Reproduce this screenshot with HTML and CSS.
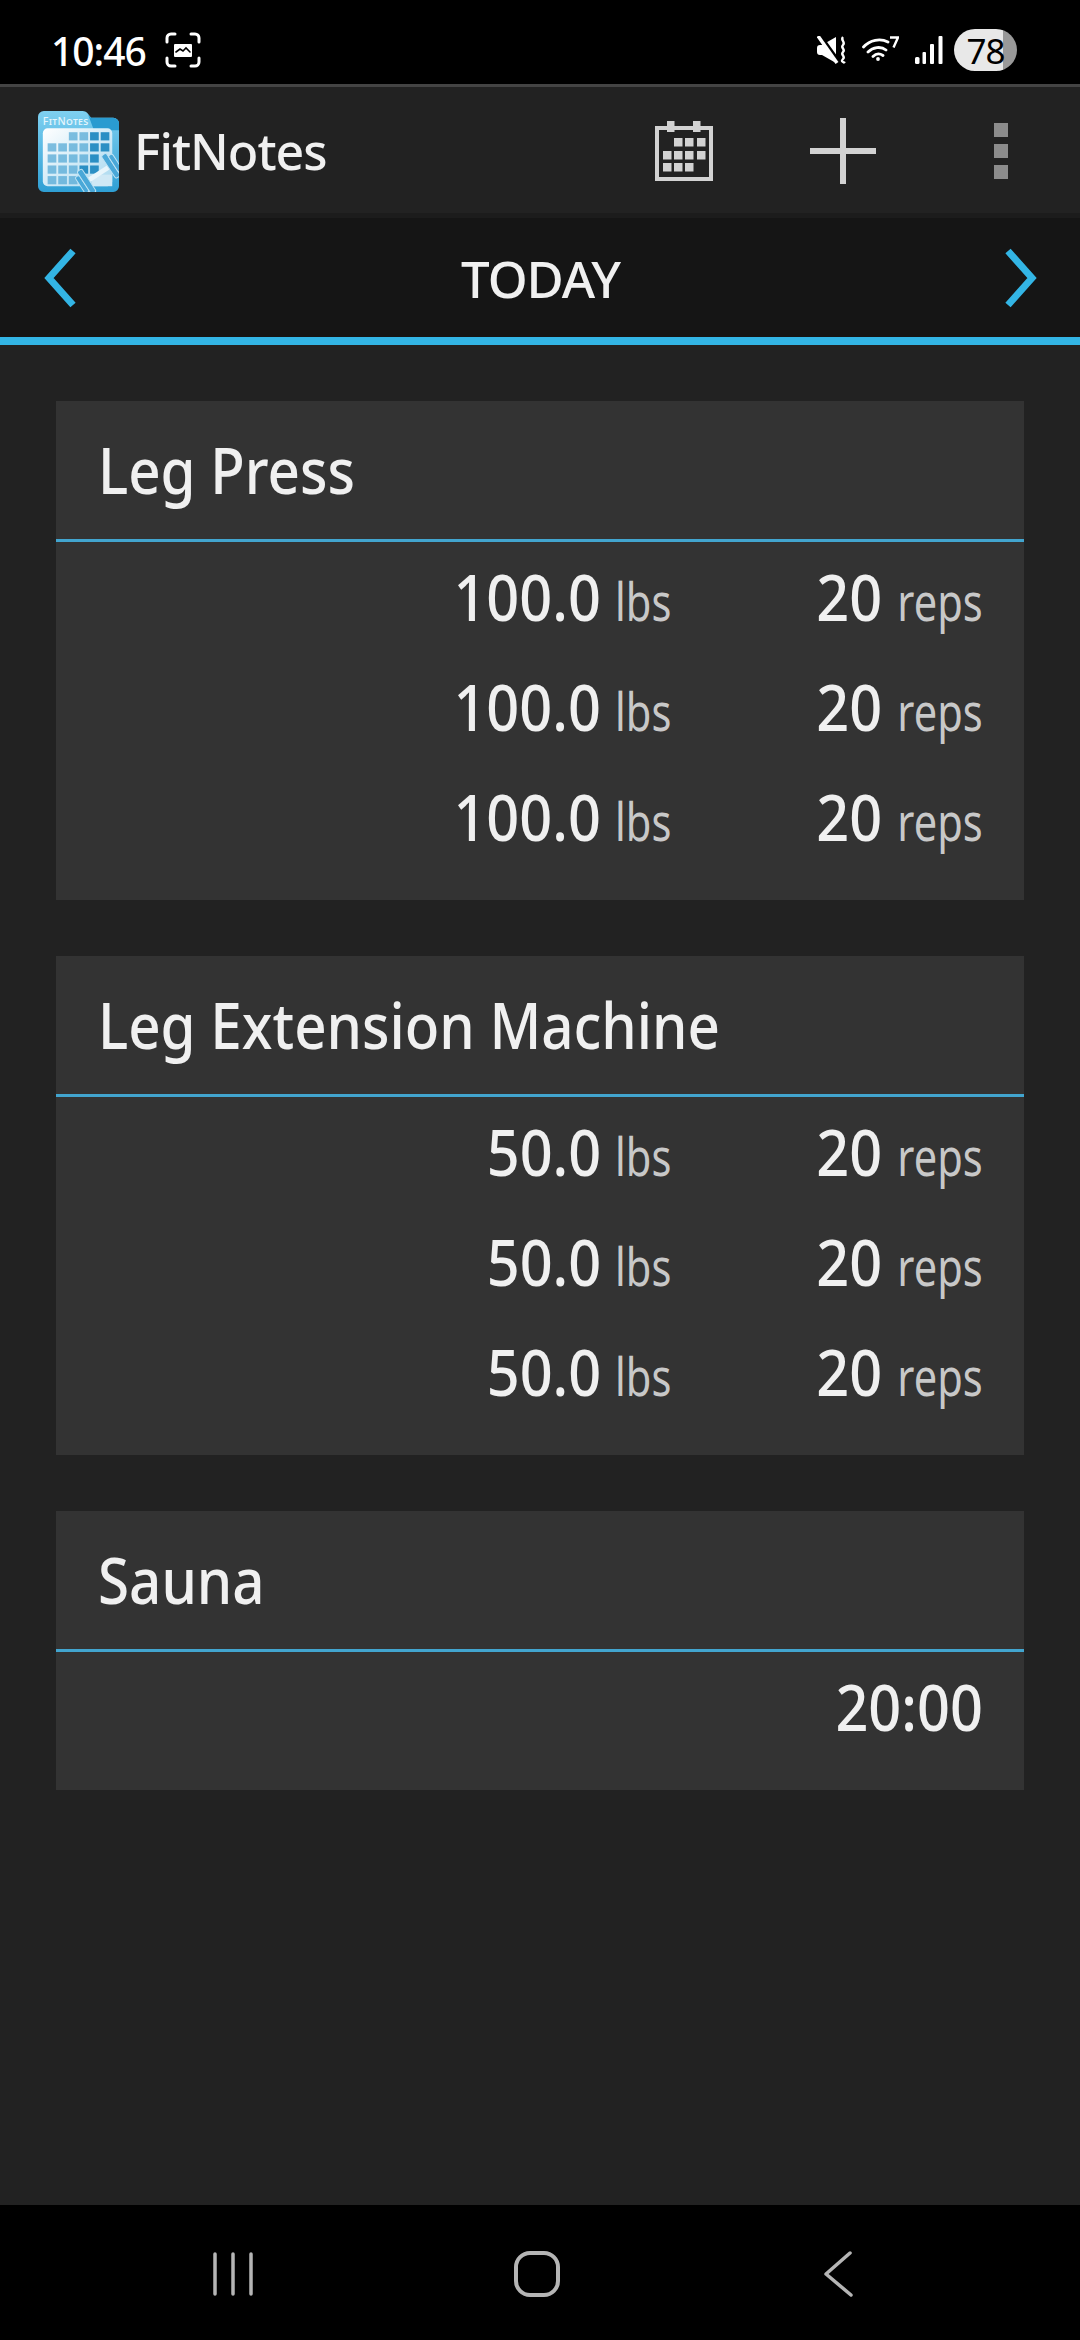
FILE: index.html
```html
<!DOCTYPE html>
<html lang="en">

<head>
  <meta charset="UTF-8">
  <meta name="viewport" content="width=device-width, initial-scale=1.0">
  <title>FitNotes</title>
  <link rel="stylesheet" href="styles.css">
</head>

<body>
  <div class="page">
    <!-- status bar -->
    <div class="status">
      <span class="clock">10:46</span>
      <svg class="shot" width="36" height="36" viewBox="0 0 36 36" fill="none" stroke="#fff" stroke-width="3" stroke-linecap="round">
        <path d="M2 10V6a4 4 0 0 1 4-4h4M26 2h4a4 4 0 0 1 4 4v4M34 26v4a4 4 0 0 1-4 4h-4M10 34H6a4 4 0 0 1-4-4v-4" />
        <path d="M10 13h16v11H10z" fill="#fff" stroke-width="2" stroke-linejoin="round" />
        <path d="M11 20l4-3 3 2 3-3 4 4" stroke="#000" stroke-width="1.6" />
      </svg>
      <div class="status-right">
        <svg width="30" height="28" viewBox="0 0 30 28" fill="#fff">
          <path d="M0 12q0-3 3-3h2L19 1v26L5 19H3q-3 0-3-3z" />
          <path d="M2 -1L22 27" stroke="#000" stroke-width="5" />
          <path d="M1 0L20 27" stroke="#fff" stroke-width="3.500" />
          <path d="M26 1c-3 3 3 5 0 8s3 4 0 7 3 4 0 7 1 3 2 4" fill="none" stroke="#fff" stroke-width="2.400" />
        </svg>
        <svg class="wifi" width="37" height="25" viewBox="0 0 37 25" fill="none" stroke="#fff" stroke-width="2.800" stroke-linecap="round">
          <path d="M1.500 11C8 4 18 2 26 6M6 16c5-5 13-6 18-2M11 20.500c3-3 7-3 10-1" />
          <circle cx="16" cy="23" r="1.900" fill="#fff" stroke="none" />
          <path d="M28 1.500h8l-4.500 10" stroke-width="2.400" stroke-linecap="butt" />
        </svg>
        <svg class="signal" width="28" height="28" viewBox="0 0 28 28" fill="#fff">
          <rect x="0" y="21" width="4.500" height="7" rx="1.500" />
          <rect x="7.500" y="16" width="3.500" height="12" rx="1" />
          <rect x="15" y="8" width="4" height="20" rx="1" />
          <rect x="23.500" y="0" width="4" height="28" rx="1" />
        </svg>
        <div class="battery"><span class="battery-num">78</span></div>
      </div>
    </div>

    <!-- app bar -->
    <div class="appbar">
      <svg class="logo" width="81" height="81" viewBox="0 0 84 84">
        <defs>
          <linearGradient id="folder" x1="0" y1="0" x2="0" y2="1">
            <stop offset="0" stop-color="#7fd0f0" />
            <stop offset="1" stop-color="#2f9fd4" />
          </linearGradient>
          <linearGradient id="sheet" x1="0" y1="0" x2="1" y2="1">
            <stop offset="0" stop-color="#ffffff" />
            <stop offset="1" stop-color="#a8d8ef" />
          </linearGradient>
        </defs>
        <path d="M0 6a6 6 0 0 1 6-6h40q4 0 6 3l3 4h23a6 6 0 0 1 6 6v65a6 6 0 0 1-6 6H6a6 6 0 0 1-6-6z" fill="url(#folder)" />
        <path d="M52 4l3 3h23a6 6 0 0 1 6 6v7H58z" fill="#2a9bd0" />
        <text class="logo-text" x="5" y="14">FitNotes</text>
        <rect x="5" y="18" width="72" height="60" rx="5" fill="url(#sheet)" />
        <g fill="#4ea6d4" opacity=".7">
          <rect x="32" y="22" width="9" height="8.500" />
          <rect x="43" y="22" width="9" height="8.500" />
          <rect x="10" y="33.500" width="9" height="8.500" />
          <rect x="21" y="33.500" width="9" height="8.500" />
          <rect x="32" y="33.500" width="9" height="8.500" />
          <rect x="43" y="33.500" width="9" height="8.500" />
          <rect x="10" y="45" width="9" height="8.500" />
          <rect x="21" y="45" width="9" height="8.500" />
          <rect x="32" y="45" width="9" height="8.500" />
          <rect x="43" y="45" width="9" height="8.500" />
          <rect x="10" y="56.500" width="9" height="8.500" />
          <rect x="21" y="56.500" width="9" height="8.500" />
          <rect x="32" y="56.500" width="9" height="8.500" />
          <rect x="10" y="67.500" width="9" height="8.500" />
          <rect x="21" y="67.500" width="9" height="8.500" />
          <rect x="32" y="67.500" width="9" height="8.500" />
        </g>
        <g fill="#2a8fc4">
          <rect x="54" y="22" width="9" height="8.500" />
          <rect x="65" y="22" width="9" height="8.500" />
          <rect x="54" y="33.500" width="9" height="8.500" />
          <rect x="65" y="33.500" width="9" height="8.500" />
          <rect x="54" y="45" width="9" height="8.500" />
          <rect x="43" y="56.500" width="9" height="8.500" />
          <rect x="54" y="56.500" width="9" height="8.500" />
        </g>
        <rect x="56" y="66" width="21" height="12" fill="#cfe8f5" />
        <g transform="translate(63 65) rotate(-33)">
          <rect x="-14" y="-2.500" width="28" height="5" fill="#e8f5fb" />
          <rect x="-23" y="-10" width="5" height="20" rx="2" fill="#4aa8d8" stroke="#bfe3f4" />
          <rect x="-18" y="-14" width="6" height="28" rx="2" fill="#4aa8d8" stroke="#bfe3f4" />
          <rect x="12" y="-14" width="6" height="28" rx="2" fill="#4aa8d8" stroke="#bfe3f4" />
          <rect x="18" y="-10" width="5" height="20" rx="2" fill="#4aa8d8" stroke="#bfe3f4" />
        </g>
      </svg>
      <span class="app-title">FitNotes</span>
      <div class="actions">
        <svg class="act-cal" width="60" height="60" viewBox="0 0 60 60" fill="#d2d2d2">
          <path d="M1 5h58v55H1z M5 9v47h50V9z" fill-rule="evenodd" />
          <rect x="13" y="0" width="7.500" height="11" />
          <rect x="39" y="0" width="7.500" height="11" />
          <rect x="20" y="17" width="8.500" height="8.500" />
          <rect x="31" y="17" width="8.500" height="8.500" />
          <rect x="43" y="17" width="8.500" height="8.500" />
          <rect x="9" y="30" width="8.500" height="8.500" />
          <rect x="20" y="30" width="8.500" height="8.500" />
          <rect x="31" y="30" width="8.500" height="8.500" />
          <rect x="43" y="30" width="8.500" height="8.500" />
          <rect x="9" y="42" width="8.500" height="8.500" />
          <rect x="20" y="42" width="8.500" height="8.500" />
          <rect x="31" y="42" width="8.500" height="8.500" />
        </svg>
        <svg class="act-plus" width="66" height="66" viewBox="0 0 66 66" fill="#d2d2d2">
          <rect x="30" y="0" width="6" height="66" />
          <rect x="0" y="30" width="66" height="6" />
        </svg>
        <div class="act-more">
          <span></span>
          <span></span>
          <span></span>
        </div>
      </div>
    </div>

    <!-- date nav -->
    <div class="datebar">
      <svg width="32" height="60" viewBox="0 0 32 60" fill="none" stroke="#33b5e5" stroke-width="7">
        <path d="M29 3L5 30l24 27" />
      </svg>
      <span class="date-label">TODAY</span>
      <svg width="32" height="60" viewBox="0 0 32 60" fill="none" stroke="#33b5e5" stroke-width="7">
        <path d="M3 3l24 27L3 57" />
      </svg>
    </div>

    <div class="content">
      <div class="card">
        <div class="card-title"><span>Leg Press</span></div>
        <div class="card-body">
          <div class="row"><span class="num">100.0</span><span class="unit">lbs</span><span class="num">20</span><span class="unit">reps</span></div>
          <div class="row"><span class="num">100.0</span><span class="unit">lbs</span><span class="num">20</span><span class="unit">reps</span></div>
          <div class="row"><span class="num">100.0</span><span class="unit">lbs</span><span class="num">20</span><span class="unit">reps</span></div>
        </div>
      </div>
      <div class="card">
        <div class="card-title"><span>Leg Extension Machine</span></div>
        <div class="card-body">
          <div class="row"><span class="num">50.0</span><span class="unit">lbs</span><span class="num">20</span><span class="unit">reps</span></div>
          <div class="row"><span class="num">50.0</span><span class="unit">lbs</span><span class="num">20</span><span class="unit">reps</span></div>
          <div class="row"><span class="num">50.0</span><span class="unit">lbs</span><span class="num">20</span><span class="unit">reps</span></div>
        </div>
      </div>
      <div class="card">
        <div class="card-title"><span>Sauna</span></div>
        <div class="card-body card-body-single">
          <div class="row"><span class="num num-time">20:00</span></div>
        </div>
      </div>
    </div>

    <!-- android nav -->
    <div class="sysnav">
      <svg width="44" height="44" viewBox="0 0 44 44" stroke="#b5b5b5" stroke-width="3.500" stroke-linecap="round">
        <path d="M3 2v40M21 2v40M39 2v40" />
      </svg>
      <svg class="nav-home" width="46" height="46" viewBox="0 0 46 46" fill="none" stroke="#b5b5b5" stroke-width="4">
        <rect x="2" y="2" width="42" height="42" rx="14" />
      </svg>
      <svg width="32" height="46" viewBox="0 0 32 46" fill="none" stroke="#b5b5b5" stroke-width="3.500" stroke-linecap="round" stroke-linejoin="round">
        <path d="M27 2L3 23l25 21" />
      </svg>
    </div>
  </div>
</body>

</html>
```

FILE: styles.css
```css
* {
  margin: 0;
  padding: 0;
  box-sizing: border-box;
}

body {
  background-color: #222;
  font-family: "Noto Sans", "Open Sans", sans-serif;
  font-weight: 500;
  color: #f0f0f0;
}

.page {
  width: 1080px;
  height: 2340px;
  display: flex;
  flex-direction: column;
  overflow: hidden;
}

/* status bar */
.status {
  height: 84px;
  background-color: #000;
  display: flex;
  align-items: center;
  padding: 16px 63px 0 51px;
  flex-shrink: 0;
}

.clock {
  font-size: 39px;
  color: #fff;
  letter-spacing: -1px;
}

.shot {
  margin-left: 19px;
}

.status-right {
  margin-left: auto;
  display: flex;
  align-items: center;
}

.wifi {
  margin-left: 15px;
  margin-bottom: 4px;
}

.signal {
  margin-left: 16px;
}

.battery {
  width: 63px;
  height: 42px;
  margin-left: 11px;
  border-radius: 21px;
  background: linear-gradient(90deg, #e8e8e8 78%, #999 78%);
  display: flex;
  align-items: center;
  justify-content: center;
}

.battery-num {
  font-size: 35px;
  font-weight: 400;
  color: #000;
  letter-spacing: -1px;
}

/* app bar */
.appbar {
  height: 134px;
  flex-shrink: 0;
  border-top: 3px solid #444;
  border-bottom: 5px solid #1c1c1c;
  background-color: #222;
  display: flex;
  align-items: center;
  padding: 2px 0 0 38px;
}

.logo-text {
  font-size: 11px;
  font-variant: small-caps;
  fill: #e4f5fc;
  letter-spacing: .3px;
}

.app-title {
  font-size: 50px;
  margin-left: 15px;
  letter-spacing: -1px;
  color: #f0f0f0;
}

.actions {
  margin-left: auto;
  display: flex;
  align-items: center;
  padding-right: 72px;
}

.act-plus {
  margin-left: 96px;
}

.act-more {
  margin-left: 118px;
  display: flex;
  flex-direction: column;
  gap: 7px;
}

.act-more span {
  display: block;
  width: 14px;
  height: 14px;
  background-color: #8c8c8c;
}

/* date nav */
.datebar {
  height: 127px;
  flex-shrink: 0;
  background-color: #151515;
  border-bottom: 8px solid #33b5e5;
  display: flex;
  align-items: center;
  justify-content: space-between;
  padding: 0 43px 0 44px;
}

.date-label {
  font-size: 51px;
  color: #f0f0f0;
  letter-spacing: -1px;
}

/* workout cards */
.content {
  flex: 1;
  display: flex;
  flex-direction: column;
  gap: 56px;
  padding: 56px 56px 0;
}

.card {
  background-color: #333;
}

.card-title {
  height: 141px;
  padding-left: 42px;
  line-height: 138px;
  font-size: 63px;
  border-bottom: 3px solid #42a5cf;
  color: #f0f0f0;
}

/* the font on the phone is narrower than Noto, so squeeze it */
.card-title span {
  display: inline-block;
  transform: scaleX(.897);
  transform-origin: left;
}

.card-body {
  height: 358px;
  padding-right: 41px;
}

.card-body-single {
  height: 138px;
}

.row {
  height: 110px;
  display: grid;
  grid-template-columns: 545px 70px 211px 101px;
  align-items: baseline;
  line-height: 110px;
  white-space: nowrap;
}

.num,
.unit {
  justify-self: end;
  transform-origin: right;
}

.num {
  font-size: 64px;
  transform: scaleX(.9);
  color: #f0f0f0;
}

.num-time {
  grid-column: 1 / -1;
}

.unit {
  font-size: 52px;
  font-weight: 400;
  transform: scaleX(.8);
  color: #c8c8c8;
}

/* android nav */
.sysnav {
  height: 135px;
  flex-shrink: 0;
  background-color: #000;
  display: flex;
  align-items: center;
  justify-content: space-between;
  padding: 3px 225px 0 212px;
}

.nav-home {
  margin-right: 6px;
}
```
